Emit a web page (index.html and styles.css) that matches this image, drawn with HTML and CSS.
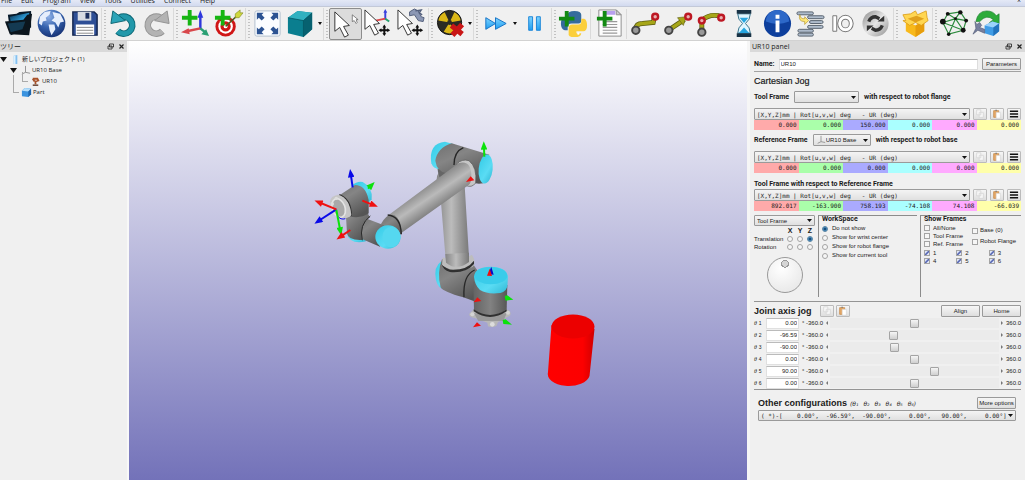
FILE: index.html
```
<!DOCTYPE html>
<html lang="ja">
<head>
<meta charset="utf-8">
<title>UR10 panel</title>
<link rel="stylesheet" href="styles.css">
</head>
<body>
<svg class="defs" aria-hidden="true">
  <defs>
    <linearGradient id="sky" x1="0" y1="0" x2="0" y2="1"><stop offset="0" stop-color="#7fd4ff"/><stop offset="1" stop-color="#1e9df0"/></linearGradient>
    <radialGradient id="ball" cx=".4" cy=".25" r=".8"><stop offset="0" stop-color="#8fb0e6"/><stop offset=".5" stop-color="#3562ae"/><stop offset="1" stop-color="#142e70"/></radialGradient>
    <linearGradient id="silver" x1="0" y1="0" x2="1" y2="1"><stop offset="0" stop-color="#8a8a8a"/><stop offset=".5" stop-color="#e6e6e6"/><stop offset="1" stop-color="#909090"/></linearGradient>
    <linearGradient id="folder" x1="0" y1="0" x2="1" y2="1"><stop offset="0" stop-color="#0a2c48"/><stop offset=".6" stop-color="#2c9fdc"/><stop offset="1" stop-color="#0a2438"/></linearGradient>
    <g id="frame-icon"><path d="M6 1v7M6 8l-4 2M6 8l5 1" fill="none" stroke="#8d8d8d"/></g>
    <g id="copy-icon"><path d="M2 1h5v6H2zM5 4h5v6H5z" fill="#f7f7f7" stroke="#d6d6d6"/></g>
    <g id="paste-icon"><path d="M2 2h6v8H2z" fill="#e5a868" stroke="#ca8f52"/><path d="M4 1h2v1H4z" fill="#777"/><path d="M5 4h5v7H5z" fill="#fff" stroke="#ccc" stroke-width=".6"/></g>
    <g id="lines-icon"><path d="M1 2.5h9M1 5.5h9M1 8.5h9" stroke="#111" stroke-width="1.8"/></g>
    <g id="float-icon"><path d="M2.5 1h4v3h-4zM1 3h4v3H1z" fill="#ddd" stroke="#333" stroke-width=".9"/></g>
    <g id="close-icon"><path d="M1.5 1.5l4 4M5.500 1.500l-4 4" stroke="#222" stroke-width="1.2"/></g>
    <path id="pointer" d="M2 1v20l5-4 5 10 4-2-5-9 6-1z" fill="#fff" stroke="#333" stroke-width="1"/>
    <path id="move" d="M22 17l2 3h-1v2h2v-1l3 2-3 2v-1h-2v2h1l-2 3-2-3h1v-2h-2v1l-3-2 3-2v1h2v-2h-1z" fill="#111"/>
    <path id="plus" d="M6 1h4v6h6v4h-6v6H6v-6H0V7h6z" fill="#16b512"/>
    <path id="plus-dark" d="M6 1h4v6h6v4h-6v6H6v-6H0V7h6z" fill="#128a12"/>
  </defs>
</svg>

<nav class="menubar" aria-label="Menu">
  <button>File</button><button>Edit</button><button>Program</button><button>View</button><button>Tools</button><button>Utilities</button><button>Connect</button><button>Help</button>
  <span class="menubar-close">×</span>
</nav>

<div class="toolbar" role="toolbar" aria-label="Tools">
  <button aria-label="Open"><svg viewBox="0 0 32 32"><path d="M5 7l9-1 3-2 12-1v17L8 28z" fill="#071a2a"/><path d="M7 9l20-4v14H9z" fill="url(#folder)"/><path d="M2 14l19-2 4-5 5-1-3 22-20-1z" fill="#0b151d"/><path d="M5 16l18-2-3 8-12 3z" fill="#143a52"/></svg></button>
  <button aria-label="Open online library"><svg viewBox="0 0 32 32"><circle cx="16" cy="16" r="14.300" fill="url(#ball)"/><path d="M4 9l5-5 6-1-1 4-4 3 1 3-4 1-1 4-3-2zM13 17l6 0 1 5-4 6-2-5zM17 4l8 2 4 8-4 1-2 5-3-5-4-2 3-3z" fill="#e6eefc"/></svg></button>
  <button aria-label="Save"><svg viewBox="0 0 32 32"><path d="M4 4h22l3 3v21H4z" fill="#2e4f96" stroke="#15264f" stroke-width="1.500"/><path d="M9 4h14v9H9z" fill="#d7dbe3"/><path d="M17 5h4v6h-4z" fill="#1c2f5f"/><path d="M7 17h19v11H7z" fill="#fff"/><path d="M8 20h17M8 23h17M8 26h17" stroke="#888"/></svg></button>
  <span class="grip"></span>
  <button aria-label="Undo"><svg viewBox="0 0 32 32"><path d="M12 10a8.800 8.800 0 1 1-2 14" fill="none" stroke="#0b6674" stroke-width="7"/><path d="M12 10a8.800 8.800 0 1 1-2 14" fill="none" stroke="#2298aa" stroke-width="5"/><path d="M5 3l13 10-15 3z" fill="#2ba4b8" stroke="#0b6674"/></svg></button>
  <button aria-label="Redo"><svg viewBox="0 0 32 32"><path d="M20 10a8.800 8.800 0 1 0 2 14" fill="none" stroke="#939393" stroke-width="7"/><path d="M20 10a8.800 8.800 0 1 0 2 14" fill="none" stroke="#b3b3b3" stroke-width="5"/><path d="M27 3L14 13l15 3z" fill="#b3b3b3" stroke="#939393"/></svg></button>
  <span class="grip"></span>
  <button aria-label="Add reference frame"><svg viewBox="0 0 32 32"><path d="M21 22V6" stroke="#2e37dc" stroke-width="2.500"/><path d="M21 2l3 8h-6z" fill="#2e37dc"/><path d="M21 21L7 24" stroke="#d8474b" stroke-width="2.500"/><path d="M1 25l8-4 1 6z" fill="#d8474b"/><path d="M21 21l5 4" stroke="#2aa074" stroke-width="2.500"/><path d="M30 29l-8-2 5-5z" fill="#2aa074"/><use href="#plus" x="2" y="1"/></svg></button>
  <button aria-label="Add target"><svg viewBox="0 0 32 32"><circle cx="13" cy="19" r="10.500" fill="#d01616"/><circle cx="13" cy="19" r="7.500" fill="#fff"/><circle cx="13" cy="19" r="5.300" fill="#d01616"/><circle cx="13" cy="19" r="2" fill="#fff"/><path d="M13 19L26 7" stroke="#4f5a1c" stroke-width="1.500"/><path d="M23 6l5-4v3h3l-4 5h-4z" fill="#cfd83c" stroke="#7b8420" stroke-width=".6"/><use href="#plus" x="2" y="1"/></svg></button>
  <span class="grip"></span>
  <button aria-label="Fit all"><svg viewBox="0 0 32 32"><rect x="3" y="3" width="26" height="26" rx="2" fill="#fbfdff" stroke="#b2bfcd"/><path d="M5 5h7l-2 2 3 3-3 3-3-3-2 2zM27 5h-7l2 2-3 3 3 3 3-3 2 2zM5 27h7l-2-2 3-3-3-3-3 3-2-2zM27 27h-7l2-2-3-3 3-3 3 3 2-2z" fill="#2c5392"/></svg></button>
  <button aria-label="Isometric view"><svg viewBox="0 0 32 32"><path d="M3 10L13 3l15 2v17l-9 8-16-4z" fill="#0a7e8f"/><path d="M3 10L13 3l15 2-9 8z" fill="#31b1c0"/><path d="M28 5v17l-9 8V13z" fill="#076170"/><path d="M3 10l16 3 9-8M19 13v17" fill="none" stroke="#055562" stroke-width=".8"/></svg></button>
  <button class="drop" aria-label="View options"></button>
  <span class="grip"></span>
  <button class="selected" aria-label="Select"><svg viewBox="0 0 32 32"><use href="#pointer" x="3" y="2"/><path d="M23 6v7l2-1 2 3 1-1-1-3h2z" fill="#fff" stroke="#555" stroke-width=".7"/></svg></button>
  <button aria-label="Move frame"><svg viewBox="0 0 32 32"><path d="M23 12V3" stroke="#3b42df" stroke-width="2"/><path d="M23 1l2 4h-4z" fill="#3b42df"/><path d="M23 11l-10 2" stroke="#df474a" stroke-width="2"/><path d="M23 11l4 3" stroke="#27a06f" stroke-width="2"/><use href="#pointer" y="1"/><use href="#move"/></svg></button>
  <button aria-label="Move tool"><svg viewBox="0 0 32 32"><path d="M14 4l5-3 4 2 3 6 3 1-1 4-5-1-4-6-5 1z" fill="#8b97b4" stroke="#535f7c"/><path d="M20 3l6-1-2 3 3 2" fill="none" stroke="#535f7c" stroke-width="1.500"/><use href="#pointer" y="1"/><use href="#move"/></svg></button>
  <span class="grip"></span>
  <button aria-label="Check collisions"><svg viewBox="0 0 32 32"><circle cx="15" cy="15" r="12.500" fill="#2b2b24" stroke="#111"/><path d="M15 15L3.500 13A12 12 0 0 1 10 4.500zM15 15l5-10.500a12 12 0 0 1 6.500 8.500zM15 15l6 9.500a12 12 0 0 1-12 0z" fill="#dbb716"/><circle cx="15" cy="15" r="2.500" fill="#2b2b24"/><path d="M17 18l11 9M28 17L18 28" stroke="#c91616" stroke-width="5.500"/></svg></button>
  <button class="drop" aria-label="Collision options"></button>
  <span class="grip"></span>
  <button aria-label="Fast simulation"><svg viewBox="0 0 32 32"><path d="M6 10l10 6-10 6zM16 10l11 6-11 6z" fill="url(#sky)" stroke="#1673c5"/></svg></button>
  <button class="drop" aria-label="Speed options"></button>
  <button aria-label="Pause"><svg viewBox="0 0 32 32"><path d="M10 9h4v14h-4zM18 9h4v14h-4z" fill="url(#sky)" stroke="#1c86d8"/></svg></button>
  <span class="grip"></span>
  <button aria-label="Add Python program"><svg viewBox="0 0 32 32"><path d="M10 10V7q0-4 7-4t7 4v6q0 3-3 3h-7q-4 0-4 4v3H7q-4-1-4-7t4-6h10" fill="#356b9d"/><path d="M24 11h3q3 1 3 7t-4 6h-7v2h5q0 4-7 4t-6-4v-5q0-4 4-4h6q3 0 3-3z" fill="#fbcf3c"/><circle cx="21" cy="26.500" r="1.200" fill="#fff"/><use href="#plus-dark" x="1" y="2"/></svg></button>
  <span class="rule"></span>
  <button aria-label="Add program"><svg viewBox="0 0 32 32"><path d="M5 2h18l5 5v22H5z" fill="#fdfdfd" stroke="#8d8d8d"/><path d="M11 3h11v4H11z" fill="#b8a0ee"/><path d="M23 2l5 5h-5z" fill="#ccc" stroke="#8d8d8d"/><path d="M9 14h15M9 17h15M9 20h15M9 23h15M9 26h15" stroke="#999" stroke-width="1.200"/><use href="#plus-dark" x="3" y="2"/></svg></button>
  <span class="rule"></span>
  <button aria-label="Move joint"><svg viewBox="0 0 32 32"><path d="M6 22q0-6 7-6l11-1 1-5" fill="none" stroke="#5c5c10" stroke-width="5"/><path d="M6 22q0-6 7-6l11-1 1-5" fill="none" stroke="#a6a618" stroke-width="3.500"/><circle cx="6" cy="23" r="3.800" fill="#999" stroke="#444" stroke-width="2"/><circle cx="26" cy="9" r="3" fill="#e9b0b0" stroke="#bd1823" stroke-width="2.500"/></svg></button>
  <button aria-label="Move linear"><svg viewBox="0 0 32 32"><path d="M7 22L22 12" stroke="#5c5c10" stroke-width="5"/><path d="M7 22L22 12" stroke="#a6a618" stroke-width="3.500"/><path d="M15 10l9-1-3 9z" fill="#a6a618" stroke="#5c5c10" stroke-width=".6"/><circle cx="6" cy="23" r="3.800" fill="#999" stroke="#444" stroke-width="2"/><circle cx="26" cy="9" r="3" fill="#e9b0b0" stroke="#bd1823" stroke-width="2.500"/></svg></button>
  <button aria-label="Move circular"><svg viewBox="0 0 32 32"><path d="M6 24V13q7-7 18-5" fill="none" stroke="#5c5c10" stroke-width="5"/><path d="M6 24V13q7-7 18-5" fill="none" stroke="#a6a618" stroke-width="3.500"/><circle cx="6" cy="25" r="3.800" fill="#999" stroke="#444" stroke-width="2"/><circle cx="6" cy="13" r="3" fill="#e9b0b0" stroke="#bd1823" stroke-width="2.500"/><circle cx="26" cy="10" r="3" fill="#e9b0b0" stroke="#bd1823" stroke-width="2.500"/></svg></button>
  <button aria-label="Pause instruction"><svg viewBox="0 0 32 32"><path d="M9 6h13q0 6-5 10 5 4 5 10H9q0-6 5-10-5-4-5-10z" fill="#dff5ff" stroke="#357189"/><path d="M11 10h9l-4.500 5.500zM10 26l5.500-6 5.500 6z" fill="#27a5df"/><path d="M8 2h15v4H8zM8 26h15v4H8z" fill="#173246"/></svg></button>
  <button aria-label="Show message"><svg viewBox="0 0 32 32"><circle cx="16" cy="16" r="14" fill="#0e3f9c"/><path d="M4 14a12 12 0 0 1 24 0q-12 5-24 0z" fill="#2d68c8"/><path d="M14 7h4v4h-4zM14 13h4v12h-4z" fill="#fff"/></svg></button>
  <button aria-label="Call program"><svg viewBox="0 0 32 32"><g fill="#aebbcb" stroke="#59636f"><rect x="2" y="4" width="17" height="3" rx="1.500"/><rect x="13" y="8" width="17" height="3" rx="1.500"/><rect x="15" y="13" width="14" height="3" rx="1.500"/><rect x="13" y="18" width="16" height="3" rx="1.500"/><rect x="3" y="22" width="16" height="3" rx="1.500"/><rect x="3" y="26" width="16" height="3" rx="1.500"/></g><path d="M5 7q1 5 5 4V9l4 4-4 4v-3q-7 0-5-7z" fill="#ffe878" stroke="#b6952c" stroke-width=".7"/></svg></button>
  <button aria-label="Set or wait IO"><svg viewBox="0 0 32 32"><path d="M5 8h4v16H5z" fill="#fff" stroke="#777"/><ellipse cx="18" cy="16" rx="6" ry="6.500" fill="none" stroke="#777" stroke-width="5"/><ellipse cx="18" cy="16" rx="6" ry="6.500" fill="none" stroke="#fff" stroke-width="3"/></svg></button>
  <button aria-label="Synchronize"><svg viewBox="0 0 32 32"><circle cx="15" cy="16" r="13.500" fill="url(#silver)"/><path d="M8 14q2-5 7-5l4 2M22 18q-2 5-7 5l-4-2" fill="none" stroke="#333" stroke-width="3.500"/><path d="M17 14h7V8zM13 18H6v6z" fill="#333"/></svg></button>
  <span class="grip"></span>
  <button aria-label="Package"><svg viewBox="0 0 32 32"><path d="M6 13l10 5 9-5v11l-9 6-10-6z" fill="#f8b91b"/><path d="M16 18l9-5v11l-9 6z" fill="#e79d0c"/><path d="M6 13L3 7l8-1 5-3 2 4 9-4 1 7 1 3-7 5-6-3-6 3-7-5z" fill="#ffd651" stroke="#d99912" stroke-width=".8"/><path d="M8 11l9-3 8 3-9 4z" fill="#e0a01c"/></svg></button>
  <span class="grip"></span>
  <button aria-label="Network"><svg viewBox="0 0 32 32"><path d="M9 6l13-2 6 9-3 10-15 4-6-12zM9 6l8 5 11 2M17 11l8 12M22 4l-5 7-13 4M10 27l7-16M4 15l21 8" fill="none" stroke="#2b8a3c" stroke-width="1.200"/><g fill="#111"><circle cx="9" cy="6" r="2"/><circle cx="22" cy="4.500" r="2.300"/><circle cx="28" cy="13" r="2"/><circle cx="25" cy="23" r="2.500"/><circle cx="10" cy="27" r="1.800"/><circle cx="4" cy="14" r="3"/><circle cx="17" cy="11" r="1.500"/></g></svg></button>
  <button aria-label="Convert"><svg viewBox="0 0 32 32"><path d="M4 14Q6 3 15 3q7 0 10 5l3-2v10l-10-1 4-3q-7-6-14 2z" fill="#2dab3b" stroke="#15772a" stroke-width=".6"/><path d="M13 18l8-4 7 2v8l-6 5-9-3z" fill="#3f9ce6"/><path d="M13 18l8-4 7 2-6 4z" fill="#9ad2fb"/><path d="M22 20l6-4v8l-6 5z" fill="#2273bd"/><path d="M3 14l2 3 3-2 2 3-2 2 5 2v4l-7-3-5 4 3-6z" fill="#77809f" stroke="#4b536f" stroke-width=".6"/></svg></button>
</div>

<main class="workspace">
  <aside class="dock tree-dock">
    <header class="dock-title"><h2>ツリー</h2><button aria-label="Float tree"><svg viewBox="0 0 7 7"><use href="#float-icon"/></svg></button><button aria-label="Close tree"><svg viewBox="0 0 7 7"><use href="#close-icon"/></svg></button></header>
    <ul class="tree">
      <li><span class="twisty"></span><svg class="node-icon" viewBox="0 0 12 12"><path d="M4 2l4-1v10H4z" fill="#83c0f0"/><path d="M4 2l2-.5v9.500H4z" fill="#dceffd"/></svg>新しいプロジェクト (1)
        <ul>
          <li><span class="twisty"></span><svg class="node-icon" viewBox="0 0 12 12"><use href="#frame-icon"/></svg>UR10 Base
            <ul><li><span class="branch"></span><svg class="node-icon" viewBox="0 0 12 12"><path d="M3 3h5l1 2-3 1v3M3 3l2 3" fill="none" stroke="#a8522a" stroke-width="2"/><path d="M3 10h6" stroke="#5c3320" stroke-width="1.500"/></svg>UR10</li></ul>
          </li>
          <li class="part"><span class="branch"></span><svg class="node-icon" viewBox="0 0 12 12"><path d="M1 4l3-3 7 1v6l-3 3-7-1z" fill="#3b93df"/><path d="M1 4l3-3 7 1-3 3z" fill="#b5defa"/><path d="M11 2v6l-3 3V5z" fill="#1f66ad"/></svg>Part</li>
        </ul>
      </li>
    </ul>
  </aside>

  <section class="viewport" aria-label="3D view">
    <svg viewBox="129 41 618 439" preserveAspectRatio="xMidYMid slice" role="img" aria-label="UR10 robot and red cylinder">
      <defs>
        <linearGradient id="tube" x1="0" x2="1" y1="0" y2="0"><stop offset="0" stop-color="#858585"/><stop offset=".45" stop-color="#bcbcbc"/><stop offset="1" stop-color="#787878"/></linearGradient>
        <linearGradient id="arm" gradientUnits="userSpaceOnUse" x1="350" y1="185" x2="395" y2="252"><stop offset="0" stop-color="#8b8b8b"/><stop offset=".45" stop-color="#bababa"/><stop offset="1" stop-color="#7a7a7a"/></linearGradient>
        <linearGradient id="dark" x1="0" x2="1" y1="0" y2="0"><stop offset="0" stop-color="#646464"/><stop offset=".5" stop-color="#828282"/><stop offset="1" stop-color="#565656"/></linearGradient>
        <linearGradient id="darkv" x1="0" x2=".6" y1="0" y2="1"><stop offset="0" stop-color="#707070"/><stop offset=".4" stop-color="#858585"/><stop offset="1" stop-color="#555"/></linearGradient>
        <linearGradient id="cyan" x1="0" x2="1" y1="0" y2="1"><stop offset="0" stop-color="#33cbe6"/><stop offset=".6" stop-color="#5adcf4"/><stop offset="1" stop-color="#30b8d4"/></linearGradient>
        <linearGradient id="red" x1="0" x2="1" y1="0" y2="0"><stop offset="0" stop-color="#f00"/><stop offset=".75" stop-color="#fc0000"/><stop offset="1" stop-color="#d00000"/></linearGradient>
        <marker id="tip" viewBox="0 0 10 8" refX="2" refY="4" markerWidth="30" markerHeight="20" markerUnits="userSpaceOnUse" orient="auto"><path d="M0 0l10 4-10 4z" fill="context-stroke"/></marker>
      </defs>
      <g transform="translate(300 130) scale(.33333)">
        <path d="M417 125Q400 150 422 205L438 400Q470 418 508 398L493 150Z" fill="url(#tube)"/>
        <path d="M412 112Q415 145 430 160L490 120 480 90z" fill="#666"/>
        <path d="M408 450Q400 410 424 394L436 478Q414 478 408 450z" fill="url(#cyan)"/>
        <path d="M426 388Q410 430 422 472Q430 486 490 502L535 518 545 440 521 405V388Z" fill="url(#darkv)"/>
        <path d="M428 382Q470 402 516 374Q530 398 518 410Q472 436 426 406Z" fill="#bdbdbd"/>
        <path d="M424 400Q428 412 450 419Q500 422 522 392V402Q500 430 450 426Q428 420 424 400Z" fill="#303030"/>
        <path d="M436 372L507 368 507 396Q470 424 438 398Z" fill="url(#tube)"/>
        <path d="M524 420Q488 436 492 502" fill="none" stroke="#282828" stroke-width="4"/>
        <path d="M521 538L508 551Q505 562 524 564L562 578 564 589Q575 594 589 588L594 577 630 557Q637 542 618 538Z" fill="#b8b8b8"/>
        <path d="M522 550L620 550 610 573H535Z" fill="#999"/><circle cx="577" cy="583" r="7" fill="#ddd"/><circle cx="517" cy="553" r="6" fill="#d4d4d4"/><circle cx="624" cy="548" r="6" fill="#d4d4d4"/>
        <path d="M520 455L522 540Q570 575 620 538L622 465Z" fill="url(#dark)"/>
        <path d="M521 538Q570 572 620 538V544Q570 578 521 544Z" fill="#313131"/>
        <path d="M522 440Q525 410 572 410T624 440L622 470Q615 490 590 490Q560 492 540 480Q524 465 522 440Z" fill="url(#cyan)"/>
        <ellipse cx="573" cy="437" rx="49" ry="26" fill="#3accea"/>
        <path d="M394 100Q385 40 435 35L460 42 417 118Q400 116 394 100Z" fill="url(#cyan)"/>
        <path d="M455 40L568 74Q550 120 550 160Q520 165 500 148L440 130Q410 124 406 92Q412 54 455 40Z" fill="url(#darkv)"/>
        <path d="M490 53Q462 65 462 105" fill="none" stroke="#262626" stroke-width="4"/>
        <ellipse cx="557" cy="117" rx="21" ry="44" transform="rotate(6 557 117)" fill="url(#cyan)"/>
        <path d="M470 102Q485 86 507 92Q532 112 527 159Q515 175 497 166Z" fill="#c6c6c6" stroke="#555" stroke-width="2"/>
        <path d="M262 258L475 100Q515 88 514 142Q514 160 505 166L305 308Q270 302 262 258Z" fill="url(#arm)"/>
        <path d="M243 282Q262 248 284 256Q305 270 304 312L260 330Z" fill="url(#darkv)"/>
        <path d="M263 255Q302 258 304 313" fill="none" stroke="#272727" stroke-width="4"/>
        <path d="M140 308Q148 345 198 334L190 312Z" fill="url(#cyan)"/>
        <path d="M185 260L252 286 240 350 184 326Q176 285 185 260Z" fill="url(#darkv)"/>
        <path d="M138 260L205 210Q198 248 210 262Q180 280 186 330Q145 332 141 310Z" fill="url(#darkv)"/>
        <path d="M211 258Q176 284 187 331" fill="none" stroke="#292929" stroke-width="3"/>
        <path d="M157 166Q170 153 188 156Q219 172 215 208L204 220Z" fill="url(#cyan)"/>
        <path d="M115 198L165 165Q197 165 206 210V250Q180 268 145 258Z" fill="url(#darkv)"/>
        <path d="M118 194Q154 208 154 258" fill="none" stroke="#303030" stroke-width="4"/>
        <path d="M90 214Q92 198 114 194Q150 204 154 256Q145 267 121 265Q91 248 90 214Z" fill="#c6c6c6"/>
        <ellipse cx="116" cy="234" rx="19" ry="29" transform="rotate(-20 116 234)" fill="#a9a9a9" stroke="#e4e4e4" stroke-width="5"/>
        <circle cx="97" cy="222" r="5" fill="#ddd"/><circle cx="109" cy="205" r="5" fill="#ddd"/>
        <ellipse cx="264" cy="321" rx="38" ry="35" fill="url(#cyan)"/><ellipse cx="274" cy="321" rx="27" ry="31" fill="#55d8f0"/>
        <g fill="none" stroke-width="6">
          <g stroke="#0909e8"><path d="M158 172L153 137" marker-end="url(#tip)"/><path d="M109 238L60 270" marker-end="url(#tip)"/><path d="M112 257q10 14 24 9" stroke-width="3"/></g>
          <g stroke="#0be20b"><path d="M109 240L120 297" marker-end="url(#tip)"/><path d="M204 176L210 170" marker-end="url(#tip)"/><path d="M553 80L552 54" marker-end="url(#tip)"/></g>
          <g stroke="#ef1111"><path d="M109 238L62 219" marker-end="url(#tip)"/><path d="M187 212L215 223" marker-end="url(#tip)"/><path d="M151 300L126 317" marker-end="url(#tip)"/></g>
        </g>
        <path d="M614 498l8-2 18 13-23 3zM608 570l9-2 19 16-26-2z" fill="#0be20b"/>
        <path d="M498 156l14-17 11 12zM521 517l11-15 12 11zM519 592l12-15 12 10z" fill="#ef1111"/><path d="M574 410l7 24-16-2z" fill="#0909c8"/><path d="M569 416l7 22-15-1z" fill="#ef1111"/>
      </g>
      <path d="M551.500 325L548 372A21 12 0 0 0 589.500 376L594.500 329Z" fill="url(#red)"/>
      <ellipse cx="573" cy="326.500" rx="21.500" ry="12" fill="#ec0000"/>
    </svg>
  </section>

  <aside class="dock robot-dock">
    <header class="dock-title"><h2>UR10 panel</h2><button aria-label="Float panel"><svg viewBox="0 0 7 7"><use href="#float-icon"/></svg></button><button aria-label="Close panel"><svg viewBox="0 0 7 7"><use href="#close-icon"/></svg></button></header>
    <form class="panel">
      <div class="row name-row"><label for="name">Name:</label><input id="name" value="UR10"><button type="button" class="btn wide">Parameters</button></div>
      <h3>Cartesian Jog</h3>
      <div class="row frame-row"><label for="tool">Tool Frame</label><select id="tool" class="combo tool-combo"><option></option></select><span>with respect to robot flange</span></div>
      <div class="pose">
        <div class="row"><select class="combo mono" aria-label="Tool pose format"><option>[X,Y,Z]mm | Rot[u,v,w] deg &nbsp; - UR (deg)</option></select><button type="button" class="btn icon" aria-label="Copy"><svg viewBox="0 0 12 12"><use href="#copy-icon"/></svg></button><button type="button" class="btn icon" aria-label="Paste"><svg viewBox="0 0 12 12"><use href="#paste-icon"/></svg></button><button type="button" class="btn icon" aria-label="Menu"><svg viewBox="0 0 11 11"><use href="#lines-icon"/></svg></button></div>
        <div class="values"><output>0.000</output><output>0.000</output><output>150.000</output><output>0.000</output><output>0.000</output><output>0.000</output></div>
      </div>
      <div class="row frame-row"><label for="ref">Reference Frame</label><span class="with-icon"><svg viewBox="0 0 12 12"><use href="#frame-icon"/></svg><select id="ref" class="combo ref-combo"><option>UR10 Base</option></select></span><span>with respect to robot base</span></div>
      <div class="pose">
        <div class="row"><select class="combo mono" aria-label="Reference pose format"><option>[X,Y,Z]mm | Rot[u,v,w] deg &nbsp; - UR (deg)</option></select><button type="button" class="btn icon" aria-label="Copy"><svg viewBox="0 0 12 12"><use href="#copy-icon"/></svg></button><button type="button" class="btn icon" aria-label="Paste"><svg viewBox="0 0 12 12"><use href="#paste-icon"/></svg></button><button type="button" class="btn icon" aria-label="Menu"><svg viewBox="0 0 11 11"><use href="#lines-icon"/></svg></button></div>
        <div class="values"><output>0.000</output><output>0.000</output><output>0.000</output><output>0.000</output><output>0.000</output><output>0.000</output></div>
      </div>
      <p class="caption">Tool Frame with respect to Reference Frame</p>
      <div class="pose">
        <div class="row"><select class="combo mono" aria-label="Relative pose format"><option>[X,Y,Z]mm | Rot[u,v,w] deg &nbsp; - UR (deg)</option></select><button type="button" class="btn icon" aria-label="Copy"><svg viewBox="0 0 12 12"><use href="#copy-icon"/></svg></button><button type="button" class="btn icon" aria-label="Paste"><svg viewBox="0 0 12 12"><use href="#paste-icon"/></svg></button><button type="button" class="btn icon" aria-label="Menu"><svg viewBox="0 0 11 11"><use href="#lines-icon"/></svg></button></div>
        <div class="values"><output>892.017</output><output>-163.900</output><output>758.193</output><output>-74.108</output><output>74.108</output><output>-66.039</output></div>
      </div>

      <div class="jog">
        <div class="jog-axes">
          <select class="combo" aria-label="Jog frame"><option>Tool Frame</option></select>
          <div class="axes">
            <span></span><b>X</b><b>Y</b><b>Z</b>
            <span>Translation</span><input type="radio" name="axis" aria-label="Translate X"><input type="radio" name="axis" aria-label="Translate Y"><input type="radio" name="axis" aria-label="Translate Z" checked>
            <span>Rotation</span><input type="radio" name="axis" aria-label="Rotate X"><input type="radio" name="axis" aria-label="Rotate Y"><input type="radio" name="axis" aria-label="Rotate Z">
          </div>
          <div class="dial" role="slider" aria-label="Jog dial" aria-valuenow="0"></div>
        </div>
        <div class="group">
          <h4>WorkSpace</h4>
          <label><input type="radio" name="ws" checked>Do not show</label>
          <label><input type="radio" name="ws">Show for wrist center</label>
          <label><input type="radio" name="ws">Show for robot flange</label>
          <label><input type="radio" name="ws">Show for current tool</label>
        </div>
        <div class="group frames">
          <h4>Show Frames</h4>
          <div class="frame-cols">
            <div class="stack"><label><input type="checkbox">All/None</label><label><input type="checkbox">Tool Frame</label><label><input type="checkbox">Ref. Frame</label></div>
            <div class="stack roomy"><label><input type="checkbox">Base (0)</label><label><input type="checkbox">Robot Flange</label></div>
          </div>
          <div class="joints-grid"><label><input type="checkbox" checked>1</label><label><input type="checkbox" checked>2</label><label><input type="checkbox" checked>3</label><label><input type="checkbox" checked>4</label><label><input type="checkbox" checked>5</label><label><input type="checkbox" checked>6</label></div>
        </div>
      </div>

      <section class="joint-section">
        <div class="row joint-head"><h3>Joint axis jog</h3><button type="button" class="btn icon" aria-label="Copy joints"><svg viewBox="0 0 12 12"><use href="#copy-icon"/></svg></button><button type="button" class="btn icon" aria-label="Paste joints"><svg viewBox="0 0 12 12"><use href="#paste-icon"/></svg></button><span class="spacer"></span><button type="button" class="btn wide">Align</button><button type="button" class="btn wide">Home</button></div>
        <div class="joint"><label for="j1"><i>θ</i> <small>1</small></label><input id="j1" value="0.00"><span>° -360.0</span><span class="slide"><input type="range" min="-360" max="360" value="0" step="any" aria-label="Joint 1"></span><span>360.0</span></div>
        <div class="joint"><label for="j2"><i>θ</i> <small>2</small></label><input id="j2" value="-96.59"><span>° -360.0</span><span class="slide"><input type="range" min="-360" max="360" value="-96.59" step="any" aria-label="Joint 2"></span><span>360.0</span></div>
        <div class="joint"><label for="j3"><i>θ</i> <small>3</small></label><input id="j3" value="-90.00"><span>° -360.0</span><span class="slide"><input type="range" min="-360" max="360" value="-90" step="any" aria-label="Joint 3"></span><span>360.0</span></div>
        <div class="joint"><label for="j4"><i>θ</i> <small>4</small></label><input id="j4" value="0.00"><span>° -360.0</span><span class="slide"><input type="range" min="-360" max="360" value="0" step="any" aria-label="Joint 4"></span><span>360.0</span></div>
        <div class="joint"><label for="j5"><i>θ</i> <small>5</small></label><input id="j5" value="90.00"><span>° -360.0</span><span class="slide"><input type="range" min="-360" max="360" value="90" step="any" aria-label="Joint 5"></span><span>360.0</span></div>
        <div class="joint"><label for="j6"><i>θ</i> <small>6</small></label><input id="j6" value="0.00"><span>° -360.0</span><span class="slide"><input type="range" min="-360" max="360" value="0" step="any" aria-label="Joint 6"></span><span>360.0</span></div>
      </section>

      <section class="other">
        <div class="row other-head"><h3>Other configurations</h3><span class="thetas"><span>(θ₁</span><span>θ₂</span><span>θ₃</span><span>θ₄</span><span>θ₅</span><span>θ₆)</span></span><span class="spacer"></span><button type="button" class="btn wide">More options</button></div>
        <select class="combo mono" aria-label="Configuration"><option>( *)-[ &nbsp; &nbsp;0.00°, &nbsp;-96.59°, &nbsp;-90.00°, &nbsp; &nbsp; 0.00°, &nbsp; 90.00°, &nbsp; &nbsp; 0.00°]</option></select>
      </section>
    </form>
  </aside>
</main>
</body>
</html>
```

FILE: styles.css
```
* { box-sizing: border-box; }
body {
  margin: 0;
  height: 100vh;
  display: flex;
  flex-direction: column;
  overflow: hidden;
  background: #f0f0f0;
  color: #1a1a1a;
  font-family: "Liberation Sans", "Noto Sans CJK JP", sans-serif;
  font-size: 6px;
}
button, input, select, output { font: inherit; color: inherit; margin: 0; padding: 0; }
button { border: 0; background: none; }
h2, h3, h4, p, ul { margin: 0; padding: 0; font-weight: 400; }
.defs { position: absolute; width: 0; height: 0; }

.menubar {
  flex: none;
  display: flex;
  gap: 9px;
  height: 7px;
  padding: 0 1px;
  line-height: 1px;
  background: linear-gradient(#e4e9f6, #d2daef);
  border-bottom: 1px solid #c3c9d8;
  font-family: "Open Sans", sans-serif;
  font-size: 7px;
}
.menubar button { height: 1px; line-height: 1px; }
.menubar-close { margin-left: auto; padding-right: 3px; }

.toolbar {
  flex: none;
  display: flex;
  align-items: center;
  height: 34px;
  padding-left: 2px;
  border-bottom: 1px solid #d2d2d2;
}
.toolbar button { flex: none; width: 33px; height: 32px; display: grid; place-items: center; }
.toolbar svg { width: 31px; height: 31px; }
.toolbar .selected { background: #dcdcdc; border: 1px solid #8d8d8d; border-radius: 2px; }
.toolbar .drop { width: 6px; }
.drop::after { content: ""; border: 2px solid transparent; border-top: 3px solid #111; border-bottom: 0; }
.grip { flex: none; width: 6px; height: 32px; border-left: 1px solid #dadada; display: flex; justify-content: center; }
.grip::after { content: ""; width: 2px; margin: 2px 0; background: repeating-linear-gradient(#c2c2c2 0 1px, #f0f0f0 1px 3px); }
.rule { flex: none; width: 3px; height: 30px; border-left: 1px solid #dadada; }

.workspace { flex: 1; min-height: 0; display: grid; grid-template-columns: 129px 1fr 278px; }
.dock { min-width: 0; font-size: 6px; }
.dock-title { display: flex; align-items: center; gap: 4px; height: 11px; padding-right: 2px; background: #d9d9d9; font-family: "Open Sans", "Noto Sans CJK JP", sans-serif; }
.dock-title h2 { flex: 1; font-size: 7px; line-height: 11px; }
.dock-title button, .dock-title svg { display: block; width: 7px; height: 7px; }
.tree-dock { border-right: 2px solid #f8f8f8; }
.tree { padding-top: 2px; font-family: "Open Sans", "Noto Sans CJK JP", sans-serif; font-size: 6px; line-height: 11px; }
.tree li { list-style: none; }
.tree ul { padding-left: 10px; }
.node-icon { width: 11px; height: 11px; margin: 0 1px 0 3px; vertical-align: middle; }
.twisty { display: inline-block; width: 7px; height: 5px; background: #111; clip-path: polygon(0 0, 100% 0, 50% 100%); vertical-align: middle; }
.branch { display: inline-block; width: 6px; height: 10px; border: 1px solid #aaa; border-width: 0 0 1px 1px; margin: -10px -1px 0 2px; vertical-align: middle; }
.part .branch { height: 18px; margin-top: -18px; margin-left: 3px; }

.viewport { min-width: 0; min-height: 0; background: linear-gradient(#fff, #7372b9); overflow: hidden; }
.viewport svg { display: block; width: 100%; height: 100%; }

.robot-dock { border-left: 3px solid #f6f6f6; }
.robot-dock .dock-title { padding-left: 2px; }
.panel { display: flex; flex-direction: column; padding: 6px 4px 0; }
.row { display: flex; align-items: center; }
.btn {
  height: 12px;
  border: 1px solid #9a9a9a;
  border-radius: 1px;
  background: linear-gradient(#f6f6f6, #dedede);
  line-height: 9px;
}
.btn.wide { width: 39px; flex: none; }
.btn.icon { width: 14px; flex: none; border-color: #bbb; display: grid; place-items: center; }
.btn.icon svg { width: 10px; height: 10px; }
.combo {
  appearance: none;
  min-width: 0;
  height: 12px;
  padding: 0 9px 0 2px;
  border: 1px solid #9a9a9a;
  border-radius: 1px;
  background: url("data:image/svg+xml,%3Csvg xmlns='http://www.w3.org/2000/svg' width='5' height='3'%3E%3Cpath d='M0 0h5L2.500 3z' fill='%23111'/%3E%3C/svg%3E") no-repeat right 2px center, linear-gradient(#f4f4f4, #e0e0e0);
  line-height: 9px;
}
.mono { flex: 1; font-family: "DejaVu Sans Mono", monospace; white-space: pre; }

.name-row { gap: 4px; padding-bottom: 1px; border-bottom: 1px solid #a2a2a2; font-weight: 400; }
.name-row label, .frame-row label, .frame-row > span, .caption { font-family: Roboto, sans-serif; font-weight: 700; font-size: 7px; line-height: 12px; }
.name-row input { flex: 1; min-width: 0; height: 11px; border: 1px solid #ddd; border-top-color: #aaa; background: #fff; padding-left: 1px; font-size: 6px; }
.panel h3 { font-size: 9px; font-weight: 700; line-height: 10px; white-space: nowrap; }
.panel > h3 { padding: 4px 0 5px; font-weight: 400; -webkit-text-stroke: .2px; }
.frame-row { gap: 5px; height: 12px; }
.tool-combo { width: 65px; }
.with-icon { display: flex; align-items: center; position: relative; }
.with-icon svg { position: absolute; left: 3px; width: 10px; height: 10px; }
.ref-combo { width: 58px; padding-left: 12px; font-family: "Liberation Sans", sans-serif; font-weight: 400; font-size: 6px; }
.pose { margin: 5px 0 4px; }
.pose .row { gap: 3px; }
.values { display: grid; grid-template-columns: repeat(6, 1fr); }
.values output { height: 10px; padding-right: 2px; text-align: right; font-family: "DejaVu Sans Mono", monospace; line-height: 10px; }
.values output:nth-child(1) { background: #ffaaaa; }
.values output:nth-child(2) { background: #aaffaa; }
.values output:nth-child(3) { background: #aaaaff; }
.values output:nth-child(4) { background: #aaffff; }
.values output:nth-child(5) { background: #ffaaff; }
.values output:nth-child(6) { background: #ffffaa; }
.caption { line-height: 10px; margin-top: 2px; }
.caption + .pose { margin-top: 0; }

.jog { display: grid; grid-template-columns: 61px 1fr 101px; gap: 3px; height: 82px; }
.jog-axes { display: flex; flex-direction: column; }
.jog-axes .combo { height: 11px; line-height: 8px; }
.axes { display: grid; grid-template-columns: 31px repeat(3, 1fr); grid-auto-rows: 8px; align-items: center; justify-items: center; margin-top: 1px; line-height: 8px; }
.axes span { justify-self: start; }
.axes b { font-size: 7px; }
.dial { align-self: center; width: 36px; height: 36px; margin-top: 6px; border: 1px solid #999; border-radius: 50%; background: radial-gradient(circle at 50% 17%, #d5d5d5 0 3px, #999 3px 4px, transparent 4px), radial-gradient(circle at 40% 30%, #fff, #e3e3e3); }
.group { border: 1px solid #8c8c8c; border-width: 1px 0 0 1px; padding-left: 3px; }
.group h4 { font-size: 7px; font-weight: 700; line-height: 7px; margin-bottom: 1px; font-family: Roboto, sans-serif; }
.group label { display: flex; align-items: center; gap: 4px; line-height: 9px; white-space: nowrap; }
.frames label { gap: 3px; line-height: 8px; }
input[type="radio"], input[type="checkbox"] { appearance: none; flex: none; width: 6px; height: 6px; border: 1px solid #a4a4a4; background: #f6f6f6; }
input[type="radio"] { border-radius: 50%; }
input[type="radio"]:checked { background: radial-gradient(#174d7c 0 1px, #5ba4d8 2px); border-color: #55809f; }
input[type="checkbox"]:checked { background: linear-gradient(135deg, #dfe5f5 30%, #5868b4 45% 60%, #dfe5f5 70%); }
.frame-cols { display: grid; grid-template-columns: 48px 1fr; }
.roomy { padding-top: 1px; }
.roomy label { line-height: 11px; gap: 2px; }
.joints-grid { display: grid; grid-template-columns: repeat(3, 1fr); margin-top: 1px; }

.joint-section { margin-top: 4px; padding: 3px 0 0; border: 1px solid #949494; border-width: 1px 0; }
.joint-head { gap: 2px; }
.joint-head h3 { width: 64px; }
.spacer { flex: 1; }
.joint { display: grid; grid-template-columns: 12px 33px 24px 1fr 18px; align-items: center; height: 12px; line-height: 12px; white-space: pre; }
.joint i { font-family: "Liberation Serif", serif; }
.joint small { font-size: 5px; }
.joint > input { min-width: 0; height: 11px; border: 1px solid #e0e0e0; border-top-color: #bbb; background: #fff; text-align: right; padding-right: 1px; }
.joint > span { text-align: right; }
.slide { display: flex; align-items: center; gap: 2px; padding: 0 0 0 3px; }
.slide::before, .slide::after { content: ""; border: 1px solid transparent; }
.slide::before { border-width: 2px 2px 2px 0; border-right-color: #777; }
.slide::after { border-width: 2px 0 2px 2px; border-left-color: #777; }
.slide input { appearance: none; flex: 1; min-width: 0; height: 10px; background: #ebebeb; }
.slide input::-webkit-slider-thumb { appearance: none; width: 9px; height: 9px; border: 1px solid #a4a4a4; border-radius: 1px; background: linear-gradient(#f5f5f5, #cfcfcf); }
.other { display: flex; flex-direction: column; padding: 7px 5px 0 4px; }
.other .mono { flex: none; height: 11px; margin-top: 1px; }
.other-head { gap: 3px; }
.thetas { display: flex; gap: 5px; font-family: "DejaVu Sans", sans-serif; font-style: italic; }
```
